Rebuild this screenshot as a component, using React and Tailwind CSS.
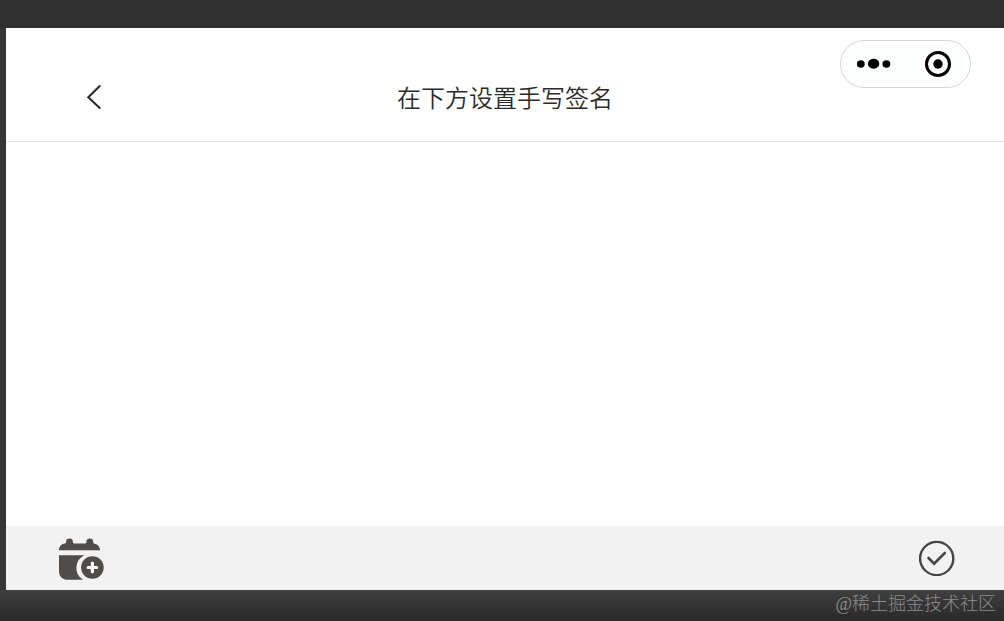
import React from "react";

function BackIcon() {
  return (
    <svg width="16" height="26" viewBox="0 0 16 26" fill="none" stroke="#2b2b2b" strokeWidth="2.1" strokeLinecap="round" strokeLinejoin="miter" aria-hidden="true">
      <path d="M13.7 2 2.3 13.2 13.7 24" />
    </svg>
  );
}

function MoreIcon() {
  return (
    <svg width="34" height="12" viewBox="0 0 34 12" fill="#000" aria-hidden="true">
      <ellipse cx="3.8" cy="6" rx="3.9" ry="3.7" />
      <ellipse cx="16.6" cy="5.7" rx="5.7" ry="5" />
      <ellipse cx="29.4" cy="6" rx="3.9" ry="3.7" />
    </svg>
  );
}

function TargetIcon() {
  return (
    <svg width="26" height="26" viewBox="0 0 26 26" aria-hidden="true">
      <circle cx="13" cy="13" r="11.5" fill="none" stroke="#000" strokeWidth="3" />
      <circle cx="13" cy="13" r="4.7" fill="#000" />
    </svg>
  );
}

function CalendarPlusIcon() {
  return (
    <svg width="46" height="44" viewBox="0 0 46 44" aria-hidden="true">
      <path
        fill="#4f4c4a"
        d="M1 14.200C1 10.500 3.500 7.700 7 7.500C8 7.300 8 6.500 8.100 6A3.400 3.400 0 0 1 14.900 6C15 6.500 15.200 7.500 16.200 7.500H27.200C28.200 7.500 28.300 6.500 28.400 6A3.400 3.400 0 0 1 35.200 6C35.300 6.500 35.400 7.400 36.300 7.700C39.700 8.200 42 10.700 42 14.200Z"
      />
      <path
        fill="#4f4c4a"
        d="M1 19.200H26.500A14 14 0 0 0 25 43.800H10C4.500 43.800 1 40.500 1 35Z"
      />
      <circle cx="34.400" cy="31.500" r="11.300" fill="#4f4c4a" />
      <path d="M34.400 27.200V35.800M30.100 31.500H38.700" stroke="#fafafa" strokeWidth="3.200" strokeLinecap="round" />
    </svg>
  );
}

function ConfirmIcon() {
  return (
    <svg width="36" height="36" viewBox="0 0 36 36" fill="none" stroke="#454545" strokeLinecap="round" aria-hidden="true">
      <circle cx="17.700" cy="18.500" r="16.600" strokeWidth="2.400" />
      <path d="M9.500 18 15.100 23.600 25.800 13" strokeWidth="2.600" />
    </svg>
  );
}

function Header() {
  return (
    <header className="grid grid-cols-[1fr_auto_1fr] items-end border-b border-[#e2e2e2] px-[33px] pt-3 pb-7">
      <button type="button" aria-label="返回" className="ml-[47px] flex h-8 w-fit items-center">
        <BackIcon />
      </button>
      <h1 className="text-2xl font-[350] text-[#2b2b2b]">在下方设置手写签名</h1>
      <div className="justify-self-end pb-[25px]">
        <div className="flex h-12 w-[131px] items-center justify-between rounded-full border border-[#d6d6d6] bg-[#fcfdfd] pr-[19px] pl-4">
          <button type="button" aria-label="更多">
            <MoreIcon />
          </button>
          <button type="button" aria-label="关闭">
            <TargetIcon />
          </button>
        </div>
      </div>
    </header>
  );
}

export default function App() {
  return (
    <div className="flex min-h-screen flex-col bg-[#2f2f2f] pt-7 font-['Noto_Sans_CJK_SC',sans-serif]">
      <div className="flex flex-1 flex-col border-l-6 border-[#363636] bg-white">
        <Header />
        <main className="flex-1" />
        <footer className="flex h-16 items-center justify-between bg-[#f2f2f2] pr-[49px] pl-13">
          <button type="button" aria-label="添加">
            <CalendarPlusIcon />
          </button>
          <button type="button" aria-label="确认">
            <ConfirmIcon />
          </button>
        </footer>
      </div>
      <div className="flex h-[31px] items-start justify-end bg-linear-to-b from-[#404040] to-[#292929] pr-2">
        <p className="font-['Liberation_Serif','Noto_Sans_CJK_SC',serif] text-lg/7 font-light text-[#8c8c8c]">@稀土掘金技术社区</p>
      </div>
    </div>
  );
}
